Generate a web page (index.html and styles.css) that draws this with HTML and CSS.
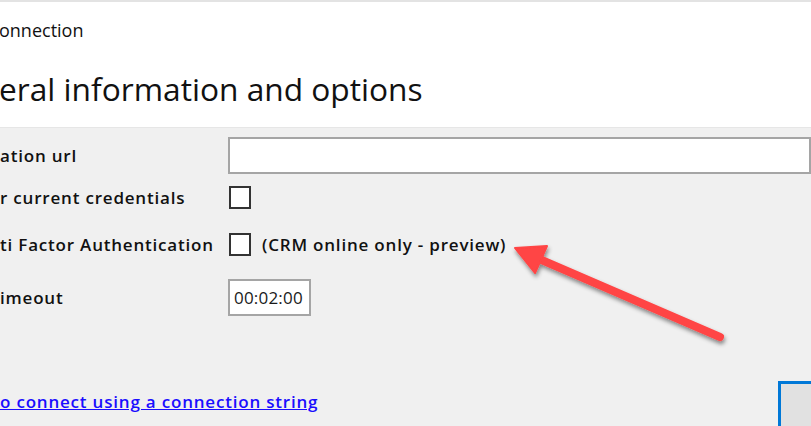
FILE: index.html
```html
<!DOCTYPE html>
<html>
<head>
<meta charset="utf-8">
<link rel="stylesheet" href="styles.css">
</head>
<body>
<div class="window">
  <header class="header">
    <div class="caption">onnection</div>
    <h1 class="title">eral information and options</h1>
  </header>
  <main class="form">
    <div class="row row-url">
      <div class="label">ation url</div>
      <div class="field"><div class="textbox wide"></div></div>
    </div>
    <div class="row row-check">
      <div class="label">r current credentials</div>
      <div class="field"><div class="checkbox"></div></div>
    </div>
    <div class="row row-check">
      <div class="label">ti Factor Authentication</div>
      <div class="field"><div class="checkbox"></div><span class="note">(CRM online only - preview)</span></div>
    </div>
    <div class="row row-timeout">
      <div class="label">imeout</div>
      <div class="field"><div class="textbox small">00:02:00</div></div>
    </div>
    <div class="footer">
      <a class="link" href="#">o connect using a connection string</a>
      <div class="button"></div>
    </div>
  </main>
  <svg class="arrow" width="811" height="426" viewBox="0 0 811 426">
    <defs>
      <filter id="sh" x="-20%" y="-20%" width="140%" height="140%">
        <feDropShadow dx="1" dy="3" stdDeviation="2" flood-color="#000" flood-opacity="0.45"/>
      </filter>
    </defs>
    <g filter="url(#sh)">
      <line x1="720" y1="337" x2="530" y2="255" stroke="#ff4444" stroke-width="8" stroke-linecap="round"/>
      <polygon points="515,248 547,246 535,273" fill="#ff4444" stroke="#ff4444" stroke-width="2" stroke-linejoin="round"/>
    </g>
  </svg>
</div>
</body>
</html>
```

FILE: styles.css
```css
html, body {
  margin: 0;
  padding: 0;
}
body {
  width: 811px;
  height: 426px;
  overflow: hidden;
  background: #f0f0f0;
  font-family: "Open Sans", "Noto Sans", sans-serif;
  color: #111;
}
.window {
  position: relative;
  width: 811px;
  height: 426px;
  border-top: 2px solid #e3e3e3;
  box-sizing: border-box;
}
.header {
  background: #fff;
  height: 126px;
  border-bottom: 1px solid #e6e6e6;
  box-sizing: border-box;
  padding-top: 16px;
}
.caption {
  font-size: 18px;
  line-height: 24px;
  margin-left: -1px;
}
.title {
  margin: 27px 0 0 -1px;
  font-size: 31.7px;
  font-weight: 400;
  line-height: 40px;
}
.form {
  padding-top: 9px;
}
.row {
  display: flex;
  align-items: center;
}
.row-url { height: 37px; }
.row-check { height: 47px; }
.row-timeout { height: 37px; margin-top: 11px; }
.label,
.note,
.link {
  font-size: 17px;
  font-weight: 600;
  letter-spacing: 0.8px;
}
.label {
  width: 228px;
  flex: none;
  white-space: nowrap;
}
.field {
  display: flex;
  align-items: center;
  flex: 1;
  min-width: 0;
}
.textbox {
  background: #fff;
  border: 2px solid #a5a5a5;
  box-sizing: border-box;
  height: 37px;
}
.textbox.wide {
  width: 600px;
}
.textbox.small {
  width: 83px;
  font-size: 17px;
  padding-left: 4px;
  line-height: 33px;
  color: #1a1a1a;
  letter-spacing: 0.2px;
}
.checkbox {
  width: 22px;
  height: 23px;
  box-sizing: border-box;
  border: 2px solid #333;
  background: #fff;
  margin-left: 1px;
}
.note {
  margin-left: 11px;
  white-space: nowrap;
}
.footer {
  display: flex;
  justify-content: space-between;
  align-items: flex-start;
  margin-top: 65px;
}
.link {
  color: #1a0dff;
  margin-top: 9px;
  text-decoration: underline;
  white-space: nowrap;
}
.button {
  width: 80px;
  height: 50px;
  box-sizing: border-box;
  border: 3px solid #0078d7;
  background: #e1e1e1;
  margin-right: -47px;
}
.arrow {
  position: absolute;
  left: 0;
  top: -2px;
  pointer-events: none;
}
```
